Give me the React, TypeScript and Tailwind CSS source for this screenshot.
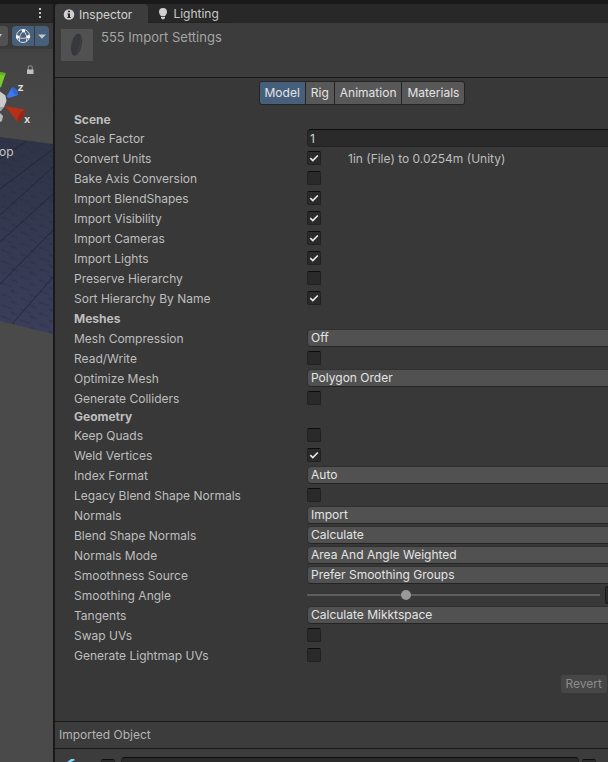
import { useState } from 'react'
import type { ReactNode } from 'react'

type Field =
  | { kind: 'text'; label: string; value: string }
  | { kind: 'check'; label: string; checked?: boolean; note?: string }
  | { kind: 'select'; label: string; options: string[] }
  | { kind: 'slider'; label: string; value: number; max: number }

const sceneFields: Field[] = [
  { kind: 'text', label: 'Scale Factor', value: '1' },
  { kind: 'check', label: 'Convert Units', checked: true, note: '1in (File) to 0.0254m (Unity)' },
  { kind: 'check', label: 'Bake Axis Conversion' },
  { kind: 'check', label: 'Import BlendShapes', checked: true },
  { kind: 'check', label: 'Import Visibility', checked: true },
  { kind: 'check', label: 'Import Cameras', checked: true },
  { kind: 'check', label: 'Import Lights', checked: true },
  { kind: 'check', label: 'Preserve Hierarchy' },
  { kind: 'check', label: 'Sort Hierarchy By Name', checked: true },
]

const meshFields: Field[] = [
  { kind: 'select', label: 'Mesh Compression', options: ['Off'] },
  { kind: 'check', label: 'Read/Write' },
  { kind: 'select', label: 'Optimize Mesh', options: ['Polygon Order'] },
  { kind: 'check', label: 'Generate Colliders' },
]

const geometryFields: Field[] = [
  { kind: 'check', label: 'Keep Quads' },
  { kind: 'check', label: 'Weld Vertices', checked: true },
  { kind: 'select', label: 'Index Format', options: ['Auto'] },
  { kind: 'check', label: 'Legacy Blend Shape Normals' },
  { kind: 'select', label: 'Normals', options: ['Import'] },
  { kind: 'select', label: 'Blend Shape Normals', options: ['Calculate'] },
  { kind: 'select', label: 'Normals Mode', options: ['Area And Angle Weighted'] },
  { kind: 'select', label: 'Smoothness Source', options: ['Prefer Smoothing Groups'] },
  { kind: 'slider', label: 'Smoothing Angle', value: 60, max: 180 },
  { kind: 'select', label: 'Tangents', options: ['Calculate Mikktspace'] },
  { kind: 'check', label: 'Swap UVs' },
  { kind: 'check', label: 'Generate Lightmap UVs' },
]

const tabs = ['Model', 'Rig', 'Animation', 'Materials']

function Checkbox({ id, defaultChecked, label }: { id: string; defaultChecked?: boolean; label?: string }) {
  return (
    <span className="grid size-3.5 shrink-0">
      <input
        id={id}
        type="checkbox"
        aria-label={label}
        defaultChecked={defaultChecked}
        className="peer col-start-1 row-start-1 size-3.5 appearance-none rounded-[2px] border border-[#212121] border-t-[#0d0d0d] bg-[#2a2a2a]"
      />
      <svg
        viewBox="0 0 14 14"
        className="pointer-events-none col-start-1 row-start-1 hidden size-3.5 peer-checked:block"
        fill="none"
        stroke="#e6e6e6"
        strokeWidth="1.7"
      >
        <path d="M3.3 7.2 L5.8 9.6 L10.8 4.5" />
      </svg>
    </span>
  )
}

function FieldControl({ field, id }: { field: Field; id: string }) {
  switch (field.kind) {
    case 'text':
      return (
        <input
          id={id}
          type="text"
          defaultValue={field.value}
          className="h-[18px] w-full rounded-l-sm border border-r-0 border-[#212121] border-t-[#0d0d0d] bg-[#2a2a2a] px-0.5 text-[#d2d2d2] outline-none"
        />
      )
    case 'check':
      return (
        <div className="flex pt-0.5">
          <Checkbox id={id} defaultChecked={field.checked} />
          {field.note && <span className="ml-[27px] leading-4">{field.note}</span>}
        </div>
      )
    case 'select':
      return (
        <select
          id={id}
          className="block h-[18px] w-full appearance-none rounded-l-sm border border-r-0 border-[#303030] border-b-[#242424] bg-[#515151] px-[3px] leading-4 text-[#e4e4e4] outline-none"
        >
          {field.options.map((option) => (
            <option key={option}>{option}</option>
          ))}
        </select>
      )
    case 'slider':
      return (
        <div className="flex h-[18px] items-center gap-[5px]">
          <input
            id={id}
            type="range"
            min={0}
            max={field.max}
            defaultValue={field.value}
            className="h-2.5 min-w-0 flex-1 appearance-none bg-transparent [&::-webkit-slider-runnable-track]:h-0.5 [&::-webkit-slider-runnable-track]:bg-[#5e5e5e] [&::-webkit-slider-thumb]:-mt-1 [&::-webkit-slider-thumb]:size-2.5 [&::-webkit-slider-thumb]:appearance-none [&::-webkit-slider-thumb]:rounded-full [&::-webkit-slider-thumb]:bg-[#999999]"
          />
          <span className="h-[18px] w-[3px] rounded-l-sm border border-r-0 border-[#1a1a1a] bg-[#2a2a2a]" />
        </div>
      )
  }
}

function FieldRows({ fields }: { fields: Field[] }) {
  return (
    <>
      {fields.map((field) => {
        const id = field.label.toLowerCase().replace(/[^a-z]+/g, '-')
        return (
          <div key={field.label} className="flex h-5">
            <label htmlFor={id} className="w-[233px] shrink-0 leading-5">
              {field.label}
            </label>
            <div className="min-w-0 flex-1">
              <FieldControl field={field} id={id} />
            </div>
          </div>
        )
      })}
    </>
  )
}

function PanelTab({ active, icon, children }: { active?: boolean; icon: ReactNode; children: ReactNode }) {
  return (
    <button
      type="button"
      className={
        active
          ? 'flex h-full items-center gap-1 rounded-t-sm bg-[#3c3c3c] pt-0.5 pr-4 pl-2 text-[#d2d2d2]'
          : 'flex h-full items-center gap-1 border-b border-[#222222] pt-0.5 pr-3 pl-[9px] text-[#c8c8c8]'
      }
    >
      {icon}
      {children}
    </button>
  )
}

function InfoIcon() {
  return (
    <svg viewBox="0 0 12 12" className="size-3">
      <circle cx="6" cy="5.500" r="5.300" fill="#d0d0d0" />
      <path d="M5 1.700h2v1.600H5zM4.400 4.400H7v3.500h.8v1.100H4.300V7.900H5V5.500h-.6z" fill="#2c2c2c" />
    </svg>
  )
}

function BulbIcon() {
  return (
    <svg viewBox="0 0 12 12" className="size-3" fill="#d0d0d0">
      <path d="M6 0a4 4 0 0 1 4 4c0 1.800-1.300 2.600-1.800 4H3.800C3.300 6.600 2 5.800 2 4a4 4 0 0 1 4-4z" />
      <path d="M4 8.800h4v1L7 11.200H5L4 9.800z" />
    </svg>
  )
}

function SceneCanvas() {
  return (
    <svg viewBox="0 0 53 713" className="block h-[713px] w-[53px]">
      <defs>
        <linearGradient id="floor" x1="0" y1="0" x2="0" y2="1">
          <stop offset="0" stopColor="#2f3347" />
          <stop offset="1" stopColor="#3a3e5a" />
        </linearGradient>
        <linearGradient id="sky" x1="0" y1="0" x2="0" y2="1">
          <stop offset="0" stopColor="#434343" />
          <stop offset="0.14" stopColor="#4a4a4a" />
          <stop offset="1" stopColor="#4a4a4a" />
        </linearGradient>
        <pattern id="marks" width="19" height="11" patternUnits="userSpaceOnUse" patternTransform="skewY(12)">
          <path d="M1 3h5l2 1h4M10 8h4l1 1h3" stroke="#2b2e42" strokeWidth="1" fill="none" />
          <path d="M3 2v2M13 7v3" stroke="#272a3b" strokeWidth="1" />
        </pattern>
        <clipPath id="floorClip">
          <path d="M0 88 53 95V285L0 272z" />
        </clipPath>
      </defs>
      <rect width="53" height="713" fill="url(#sky)" />
      <g clipPath="url(#floorClip)">
        <rect y="85" width="53" height="202" fill="url(#floor)" />
        <rect y="85" width="53" height="202" fill="url(#marks)" opacity="0.6" />
        <g stroke="#222536" strokeWidth="1" fill="none" opacity="0.85">
          <path d="M0 110 28 91M0 140 53 100M0 166 53 118M0 193 53 145M0 235 53 181M13 274 53 228" />
        </g>
      </g>

      {/* padlock */}
      <path d="M28.300 21v-2.200a2 2 0 0 1 4 0V21" fill="none" stroke="#8c8c8c" strokeWidth="1.100" />
      <rect x="27" y="20.500" width="6.500" height="4.500" fill="#c0c0c0" />

      {/* orientation gizmo */}
      <path d="M0 23.500 5.500 25 1 38 0 38.500z" fill="#78c92c" />
      <ellipse cx="1.500" cy="24.800" rx="4.200" ry="1.500" fill="#69b020" />
      <path d="M0 64 3 67 2 72 0 73z" fill="#b8b8b8" />
      <path d="M0 42.500 5.500 46.500 6.500 52 4 58 0 60z" fill="#cbcbcb" />
      <path d="M0 58 4 58 1 62 0 62z" fill="#a4a4a4" />
      <path d="M6.500 47.500 12 38.500C15 38 18.500 42 18 46L9 49z" fill="#3f78ee" />
      <path d="M12 38.500C15 38 18.500 42 18 46 14 46 12 43 12 38.500z" fill="#3364d2" />
      <path d="M5 57 25 60.500C26 66 22 71 17.500 73z" fill="#b3301a" />
      <path d="M25 60.500C26 66 22 71 17.500 73 17 68 20 63 25 60.500z" fill="#922916" />
      <g fill="#e0e0e0" fontFamily="Inter, sans-serif" fontWeight="600">
        <text x="17.500" y="42" fontSize="11">z</text>
        <text x="24" y="74" fontSize="11">x</text>
      </g>
      <text x="-1" y="107" fontSize="12" fill="#c4c4c4" fontFamily="Inter, sans-serif">op</text>
    </svg>
  )
}

function SceneView() {
  return (
    <aside className="flex w-[55px] shrink-0 flex-col overflow-hidden border-r-2 border-[#191919] bg-[#4a4a4a]">
      <div className="flex h-[19px] shrink-0 justify-end border-b border-[#222222] bg-[#282828] pr-[11px]">
        <button type="button" aria-label="Menu">
          <svg viewBox="0 0 4 12" className="h-3 w-1" fill="#c4c4c4">
            <path d="M1 1h2v2H1zM1 5h2v2H1zM1 9h2v2H1z" />
          </svg>
        </button>
      </div>
      <div className="flex h-[26px] shrink-0 items-center bg-[#3a3a3a]">
        <button type="button" aria-label="View options" className="mr-1 flex h-5 w-2 items-center rounded-r-sm bg-[#515151]">
          <svg viewBox="0 0 4 4" className="size-1" fill="#c4c4c4">
            <path d="M0 0h2L0 3z" />
          </svg>
        </button>
        <button type="button" aria-label="Gizmos" className="mr-px flex h-5 w-[22px] items-center justify-center rounded-l-sm bg-[#46607c]">
          <svg viewBox="0 0 16 16" className="size-4" fill="none" stroke="#dcdfe3" strokeWidth="1">
            <circle cx="8" cy="8" r="6.500" />
            <path d="M8.500 3C6 4.500 4 8 4.300 13M8.500 3c2.500 2 4 6 3 10.500M2.500 9c3.500 1.800 8 1.800 11.500-.5" />
            <g fill="#ffffff" stroke="none">
              <circle cx="8.500" cy="2.800" r="1.700" />
              <circle cx="2.500" cy="9" r="1.700" />
              <circle cx="13.500" cy="8.800" r="1.700" />
            </g>
          </svg>
        </button>
        <button type="button" aria-label="Gizmo menu" className="flex h-5 w-3.5 items-center justify-center rounded-r-sm bg-[#46607c]">
          <svg viewBox="0 0 8 5" className="h-[5px] w-2" fill="#c8c8c8">
            <path d="M0 .5h8L4 4.700z" />
          </svg>
        </button>
      </div>
      <SceneCanvas />
    </aside>
  )
}

export default function App() {
  const [activeTab, setActiveTab] = useState('Model')

  return (
    <div className="flex h-screen flex-col overflow-hidden bg-[#191919] pt-1 font-['Inter',sans-serif] text-xs text-[#bebebe]">
      <div className="flex min-h-0 flex-1">
        <SceneView />

        <main className="flex min-w-0 flex-1 flex-col overflow-hidden bg-[#383838]">
          <div className="flex h-[19px] shrink-0 bg-[#282828]">
            <PanelTab active icon={<InfoIcon />}>Inspector</PanelTab>
            <PanelTab icon={<BulbIcon />}>Lighting</PanelTab>
          </div>

          {/* Asset header */}
          <header className="flex h-[55px] shrink-0 gap-2 border-b border-[#1a1a1a] bg-[#3c3c3c] px-1.5 pt-1.5">
            <svg viewBox="0 0 32 32" className="size-8 shrink-0">
              <rect width="32" height="32" fill="#515151" />
              <ellipse cx="15.500" cy="15.700" rx="5.200" ry="11.300" transform="rotate(12 15.500 15.700)" fill="#36383b" />
              <path d="M19 5c2 4 0 15-5 21 5-1 8-17 5-21z" fill="#424448" />
            </svg>
            <h1 className="text-[13px] leading-4 text-[#a4a4a4]">555 Import Settings</h1>
          </header>

          <div className="mt-[3px] flex h-6 shrink-0 justify-center pl-[61px]">
            <div className="flex gap-px overflow-hidden rounded-[3px] border border-[#242424] bg-[#242424]">
              {tabs.map((tab) => (
                <button
                  key={tab}
                  type="button"
                  onClick={() => setActiveTab(tab)}
                  className={
                    tab === activeTab
                      ? 'bg-[#46607c] px-[5px] text-[#e4e4e4]'
                      : 'bg-[#585858] px-[5px] text-[#e4e4e4]'
                  }
                >
                  {tab}
                </button>
              ))}
            </div>
          </div>

          {/* Import options */}
          <form className="mt-[5px] shrink-0 pl-[19px]">
            <h2 className="h-[19px] leading-5 font-bold">Scene</h2>
            <FieldRows fields={sceneFields} />
            <h2 className="h-5 leading-5 font-bold">Meshes</h2>
            <FieldRows fields={meshFields} />
            <h2 className="h-[17px] leading-4 font-bold">Geometry</h2>
            <FieldRows fields={geometryFields} />
            <div className="mt-[9px] flex justify-end pr-px">
              <button type="button" disabled className="h-[18px] rounded-[3px] bg-[#464646] px-[5px] text-[#8c8c8c]">
                Revert
              </button>
            </div>
          </form>

          {/* Imported object preview */}
          <section className="mt-7 flex shrink-0 flex-col border-t border-[#1a1a1a] bg-[#3c3c3c]">
            <h2 className="h-[27px] border-b border-[#1a1a1a] px-1 leading-[26px] text-[#b4b4b4]">Imported Object</h2>
            <div className="flex items-start pt-2 pl-2">
              <svg viewBox="0 0 24 24" className="mt-0.5 size-6 shrink-0">
                <path d="M3 4 8 0 11 0 12 1 6 4z" fill="#7fd6fd" />
                <path d="M3 4 6 4V16L3 14z" fill="#4ba7d8" />
              </svg>
              <span className="mt-0.5 ml-3.5 flex">
                <Checkbox id="object-active" label="Active" />
              </span>
              <input
                type="text"
                aria-label="Object name"
                className="mr-[3px] ml-1.5 h-[18px] min-w-0 flex-1 rounded-sm border border-[#212121] border-t-[#0d0d0d] bg-[#2a2a2a]"
              />
              <span className="mt-0.5 mr-3 flex">
                <Checkbox id="object-static" label="Static" />
              </span>
            </div>
          </section>
        </main>
      </div>
    </div>
  )
}
